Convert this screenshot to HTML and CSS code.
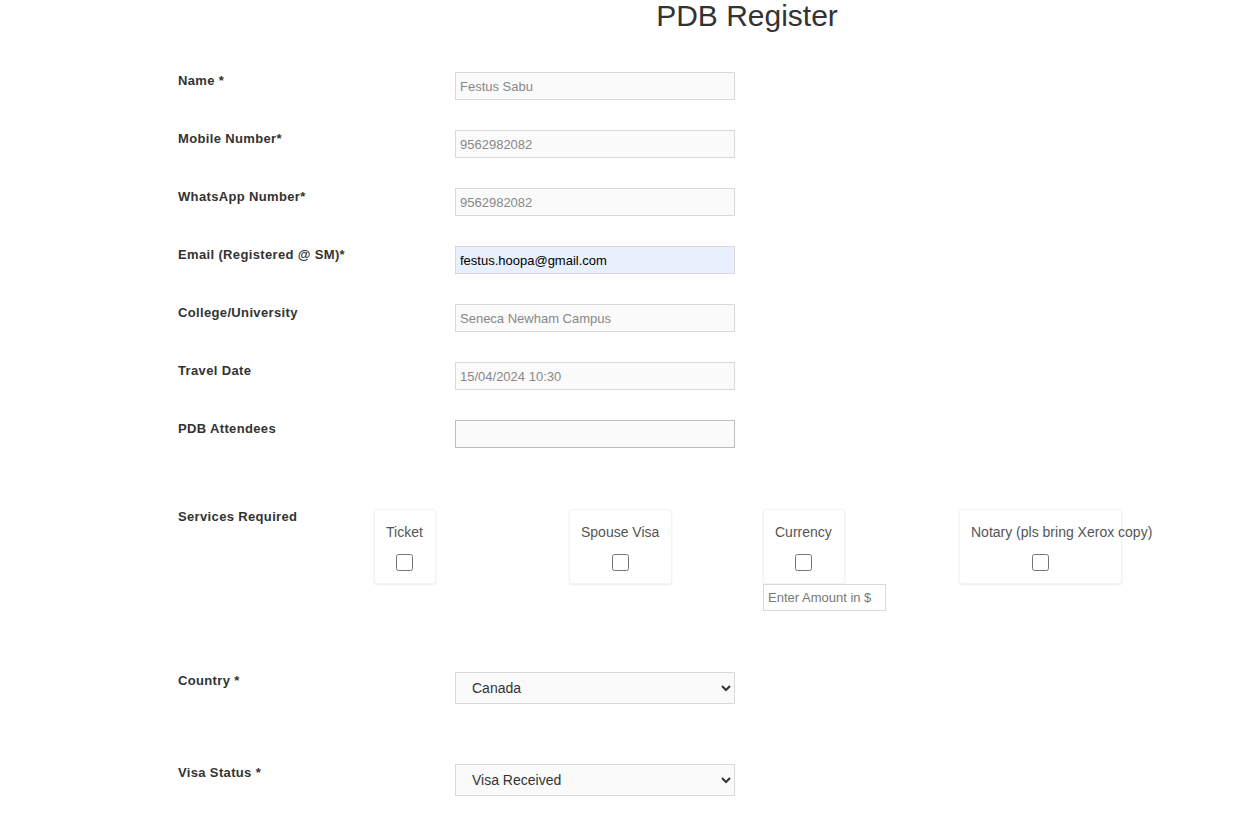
FILE: index.html
```html
<!DOCTYPE html>
<html lang="en">
<head>
<meta charset="utf-8">
<title>PDB Register</title>
<link rel="stylesheet" href="styles.css">
</head>
<body>
<h1 class="title">PDB Register</h1>
<form class="form">
  <div class="field-row">
    <label class="label">Name *</label>
    <input class="input readonly" type="text" value="Festus Sabu" readonly>
  </div>
  <div class="field-row">
    <label class="label">Mobile Number*</label>
    <input class="input readonly" type="text" value="9562982082" readonly>
  </div>
  <div class="field-row">
    <label class="label">WhatsApp Number*</label>
    <input class="input readonly" type="text" value="9562982082" readonly>
  </div>
  <div class="field-row">
    <label class="label">Email (Registered @ SM)*</label>
    <input class="input autofill" type="text" value="festus.hoopa@gmail.com">
  </div>
  <div class="field-row">
    <label class="label">College/University</label>
    <input class="input readonly" type="text" value="Seneca Newham Campus" readonly>
  </div>
  <div class="field-row">
    <label class="label">Travel Date</label>
    <input class="input readonly" type="text" value="15/04/2024 10:30" readonly>
  </div>
  <div class="field-row attendees-row">
    <label class="label">PDB Attendees</label>
    <input class="input attendees" type="text">
  </div>
  <div class="services-row">
    <label class="label services-label">Services Required</label>
    <div class="services">
      <div class="service">
        <div class="card"><div class="card-title">Ticket</div><input class="check" type="checkbox"></div>
      </div>
      <div class="service">
        <div class="card"><div class="card-title">Spouse Visa</div><input class="check" type="checkbox"></div>
      </div>
      <div class="service">
        <div class="card"><div class="card-title">Currency</div><input class="check" type="checkbox"></div>
        <input class="amount" type="text" placeholder="Enter Amount in $">
      </div>
      <div class="service">
        <div class="card"><div class="card-title">Notary (pls bring Xerox copy)</div><input class="check" type="checkbox"></div>
      </div>
    </div>
  </div>
  <div class="field-row select-row">
    <label class="label">Country *</label>
    <select class="select">
      <option>Canada</option>
    </select>
  </div>
  <div class="field-row select-row">
    <label class="label">Visa Status *</label>
    <select class="select">
      <option>Visa Received</option>
    </select>
  </div>
</form>
</body>
</html>
```
FILE: styles.css
```css
html, body {
  margin: 0;
  padding: 0;
  background: #ffffff;
  font-family: "Liberation Sans", Arial, sans-serif;
  color: #333333;
}

.title {
  margin: 0 0 40px 0;
  padding-left: 248px;
  text-align: center;
  font-size: 30px;
  line-height: 32px;
  font-weight: normal;
  color: #333333;
}

.form {
  padding-left: 178px;
}

.field-row {
  display: flex;
  align-items: flex-start;
  margin-bottom: 30px;
}

.label {
  width: 277px;
  flex: none;
  padding-top: 1px;
  font-size: 13px;
  line-height: 16px;
  font-weight: bold;
  letter-spacing: 0.35px;
  color: #333333;
}

.input {
  box-sizing: border-box;
  width: 280px;
  height: 28px;
  margin: 0;
  padding: 0 4px;
  border: 1px solid #d9d9d9;
  background: #fafafa;
  font-family: "Liberation Sans", Arial, sans-serif;
  font-size: 13px;
  color: #888888;
  outline: none;
}

.autofill {
  background: #e8f0fe;
  color: #000000;
}

.attendees {
  border: 1px solid #bdbdbd;
}

.attendees-row {
  margin-bottom: 60px;
}

.services-row {
  display: flex;
  align-items: flex-start;
  margin-bottom: 61px;
}

.services-label {
  width: 196px;
}

.services {
  display: grid;
  grid-template-columns: 195px 194px 196px 195px;
  margin-top: 1px;
}

.service {
  display: flex;
  flex-direction: column;
  align-items: flex-start;
}

.card {
  box-sizing: border-box;
  max-width: 163px;
  padding: 14px 12px 12px 11px;
  background: #ffffff;
  border: 1px solid #f3f3f3;
  border-radius: 3px;
  box-shadow: 0 1px 2px rgba(0, 0, 0, 0.08);
  display: flex;
  flex-direction: column;
  align-items: center;
}

.card-title {
  align-self: stretch;
  text-align: center;
  font-size: 14px;
  line-height: 16px;
  color: #555555;
  white-space: nowrap;
}

.check {
  width: 17px;
  height: 17px;
  margin: 14px 0 0 0;
}

.amount {
  box-sizing: border-box;
  width: 123px;
  height: 27px;
  margin: 0;
  padding: 0 4px;
  border: 1px solid #d9d9d9;
  background: #ffffff;
  font-family: "Liberation Sans", Arial, sans-serif;
  font-size: 13px;
  color: #555555;
}

.amount::placeholder {
  color: #777777;
}

.select-row {
  margin-bottom: 60px;
}

.select {
  box-sizing: border-box;
  width: 280px;
  height: 32px;
  margin: 0;
  padding: 0 8px 0 12px;
  border: 1px solid #d9d9d9;
  border-radius: 0;
  background: #fafafa;
  font-family: "Liberation Sans", Arial, sans-serif;
  font-size: 14px;
  color: #333333;
}
```
